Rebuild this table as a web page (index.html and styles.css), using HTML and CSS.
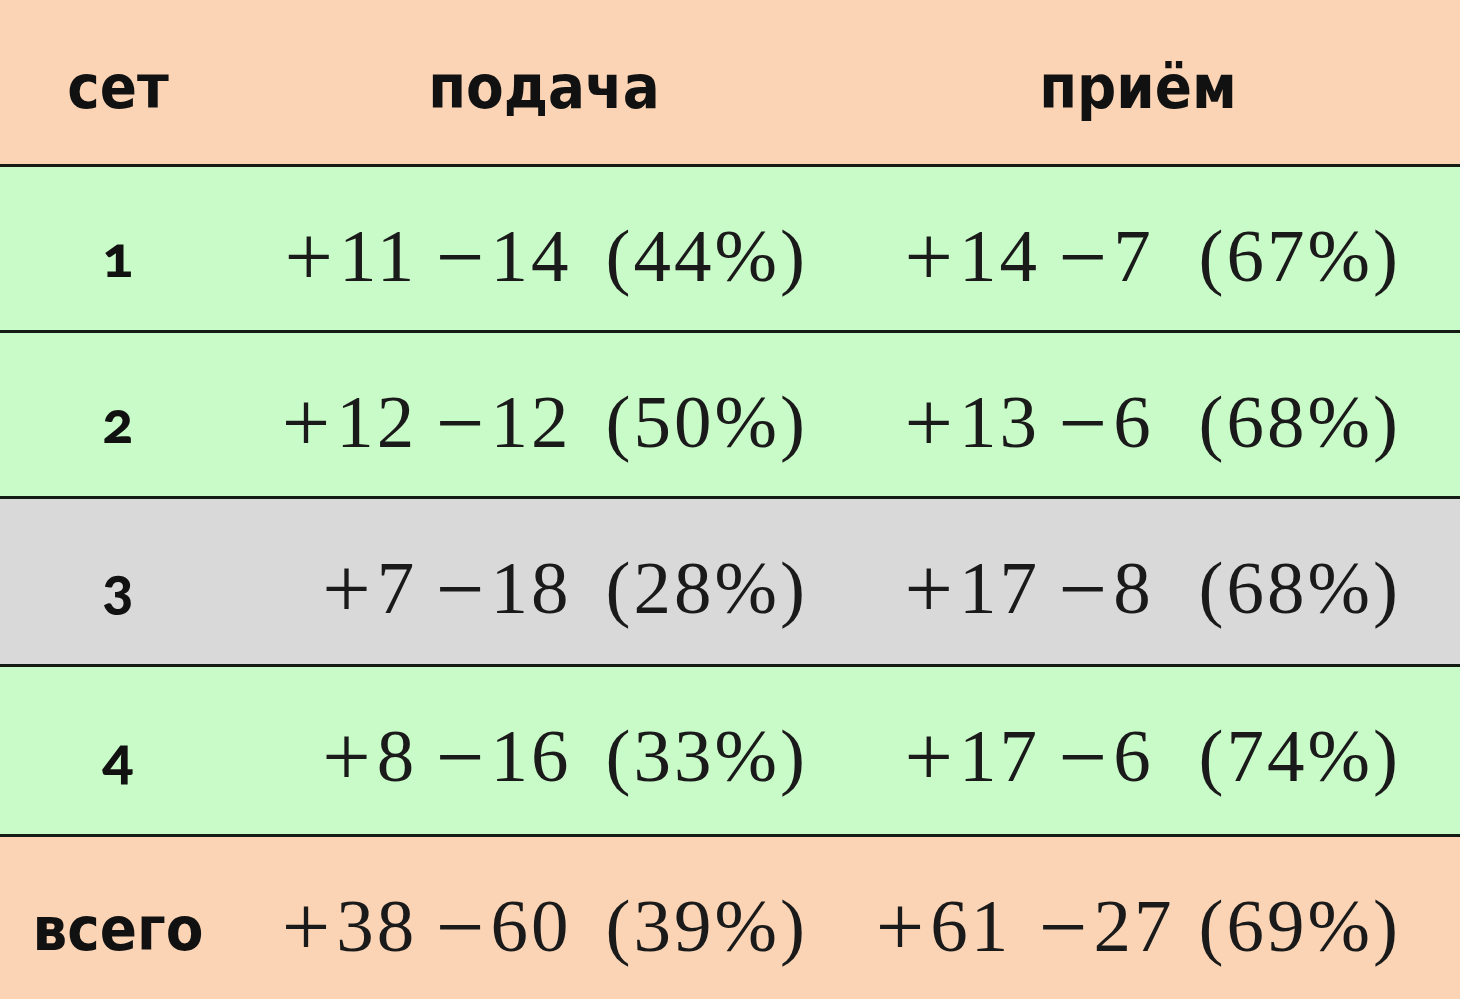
FILE: index.html
```html
<!DOCTYPE html>
<html lang="ru">
<head>
<meta charset="utf-8">
<title>Статистика по сетам</title>
<link rel="stylesheet" href="styles.css">
</head>
<body>
<div class="table">
  <div class="row head">
    <div class="cell c1">сет</div>
    <div class="cell c2h">подача</div>
    <div class="cell c3h">приём</div>
  </div>
  <div class="row green">
    <div class="cell c1 num">1</div>
    <div class="cell c2"><span class="pm"><span class="plus">+</span>11 <span class="minus">−</span>14</span><span class="pct">(44%)</span></div>
    <div class="cell c3"><span class="pm"><span class="plus">+</span>14 <span class="minus">−</span>7</span><span class="pct">(67%)</span></div>
  </div>
  <div class="row green">
    <div class="cell c1 num">2</div>
    <div class="cell c2"><span class="pm"><span class="plus">+</span>12 <span class="minus">−</span>12</span><span class="pct">(50%)</span></div>
    <div class="cell c3"><span class="pm"><span class="plus">+</span>13 <span class="minus">−</span>6</span><span class="pct">(68%)</span></div>
  </div>
  <div class="row gray">
    <div class="cell c1 num">3</div>
    <div class="cell c2"><span class="pm"><span class="plus">+</span>7 <span class="minus">−</span>18</span><span class="pct">(28%)</span></div>
    <div class="cell c3"><span class="pm"><span class="plus">+</span>17 <span class="minus">−</span>8</span><span class="pct">(68%)</span></div>
  </div>
  <div class="row green tall">
    <div class="cell c1 num">4</div>
    <div class="cell c2"><span class="pm"><span class="plus">+</span>8 <span class="minus">−</span>16</span><span class="pct">(33%)</span></div>
    <div class="cell c3"><span class="pm"><span class="plus">+</span>17 <span class="minus">−</span>6</span><span class="pct">(74%)</span></div>
  </div>
  <div class="row total">
    <div class="cell c1">всего</div>
    <div class="cell c2"><span class="pm"><span class="plus">+</span>38 <span class="minus">−</span>60</span><span class="pct">(39%)</span></div>
    <div class="cell c3"><span class="pm wide"><span class="plus">+</span>61 <span class="minus">−</span>27</span><span class="pct">(69%)</span></div>
  </div>
</div>
</body>
</html>
```
FILE: styles.css
```css
html, body {
  margin: 0;
  padding: 0;
  background: #fad4b5;
  overflow: hidden;
}

.table {
  width: 1460px;
  height: 999px;
  overflow: hidden;
  display: flex;
  flex-direction: column;
}

.row {
  display: grid;
  grid-template-columns: 236px 616px 1fr;
  height: 163px;
  flex: none;
  border-top: 3px solid #141a14;
}

.row.head {
  border-top: none;
  height: 164px;
  background: #fad4b5;
}

.row.green { background: #c9fbc8; }
.row.gray { background: #d9d9d9; height: 165px; }
.row.tall { height: 167px; }
.row.total { background: #fad4b5; height: 175px; }

.cell {
  display: flex;
  align-items: center;
  padding-top: 8px;
  box-sizing: border-box;
  color: #111;
}

.c1, .c2h, .c3h {
  justify-content: center;
  font-family: "DejaVu Sans Condensed", "DejaVu Sans", sans-serif;
  font-stretch: semi-condensed;
  font-weight: bold;
  font-size: 61px;
}

.c3h { padding-right: 36px; }

.num {
  font-family: "Lato", "DejaVu Sans", sans-serif;
  font-variant-numeric: oldstyle-nums;
  font-weight: 900;
  font-size: 58px;
  padding-top: 10px;
}

.c2, .c3 {
  font-family: "Liberation Serif", "Times New Roman", serif;
  font-size: 75px;
  letter-spacing: 3px;
  word-spacing: -3px;
  color: #1a1a1a;
  justify-content: flex-end;
  align-items: baseline;
  padding-top: 14px;
  line-height: 150px;
}

.plus, .minus {
  font-size: 86px;
  letter-spacing: 0;
  vertical-align: -5px;
}

.plus { margin-right: 6px; }
.minus { margin-right: 6px; }

.c2 { padding-right: 44px; }
.c3 { padding-right: 59px; }

.pm { white-space: nowrap; }

.c2 .pct { margin-left: 34px; }

.c3 .pm {
  display: inline-block;
  min-width: 270px;
  text-align: left;
}

.c3 .pm.wide { word-spacing: 6px; }

.c3 .pct { margin-left: 24px; }

.pct { white-space: nowrap; }
```
